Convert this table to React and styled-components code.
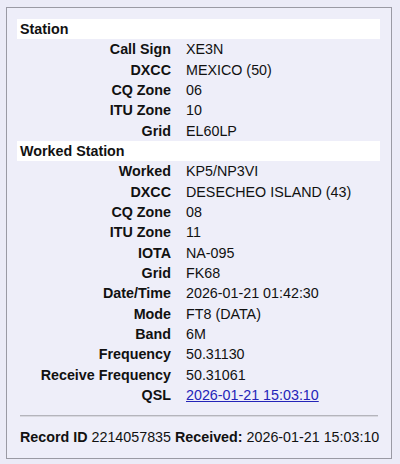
import React from "react";
import styled, { createGlobalStyle } from "styled-components";

const Global = createGlobalStyle`
  html, body { margin: 0; padding: 0; }
  body {
    background: #ebebf7;
    font-family: "Liberation Sans", Arial, sans-serif;
    font-size: 14.3px;
    color: #111;
  }
`;

const Page = styled.div`
  padding: 7px 8px 5px 6px;
`;

const Card = styled.div`
  border: 1px solid #9a9aa4;
  background: #eeeef9;
  padding: 11px 11px 12px 10px;
  height: 452px;
  box-sizing: border-box;
`;

const Table = styled.div`
  display: grid;
  grid-template-columns: 162px 1fr;
`;

const Header = styled.div`
  grid-column: 1 / -1;
  background: #fff;
  font-weight: bold;
  padding: 2px 3px;
  line-height: 16.33px;
`;

const Label = styled.div`
  text-align: right;
  font-weight: bold;
  padding: 2px 8px 2px 0;
  line-height: 16.33px;
`;

const Value = styled.div`
  padding: 2px 0 2px 7px;
  line-height: 16.33px;
`;

const Link = styled.a`
  color: #2424b8;
  text-decoration: underline;
`;

const Rule = styled.hr`
  margin: 10px 2px 0 3px;
  border: none;
  border-top: 1px solid #b4b4bc;
  border-bottom: 1px solid #d8d8e0;
`;

const Footer = styled.div`
  padding: 12px 0 0 3px;
  line-height: 16px;
  b { font-weight: bold; }
`;

const station = [
  ["Call Sign", "XE3N"],
  ["DXCC", "MEXICO (50)"],
  ["CQ Zone", "06"],
  ["ITU Zone", "10"],
  ["Grid", "EL60LP"],
];

const worked = [
  ["Worked", "KP5/NP3VI"],
  ["DXCC", "DESECHEO ISLAND (43)"],
  ["CQ Zone", "08"],
  ["ITU Zone", "11"],
  ["IOTA", "NA-095"],
  ["Grid", "FK68"],
  ["Date/Time", "2026-01-21 01:42:30"],
  ["Mode", "FT8 (DATA)"],
  ["Band", "6M"],
  ["Frequency", "50.31130"],
  ["Receive Frequency", "50.31061"],
];

const Rows = ({ rows }) =>
  rows.map(([l, v]) => (
    <React.Fragment key={l + v}>
      <Label>{l}</Label>
      <Value>{v}</Value>
    </React.Fragment>
  ));

export default function App() {
  return (
    <>
      <Global />
      <Page>
        <Card>
          <Table>
            <Header>Station</Header>
            <Rows rows={station} />
            <Header>Worked Station</Header>
            <Rows rows={worked} />
            <Label>QSL</Label>
            <Value>
              <Link href="#">2026-01-21 15:03:10</Link>
            </Value>
          </Table>
          <Rule />
          <Footer>
            <b>Record ID</b> 2214057835 <b>Received:</b> 2026-01-21 15:03:10
          </Footer>
        </Card>
      </Page>
    </>
  );
}
